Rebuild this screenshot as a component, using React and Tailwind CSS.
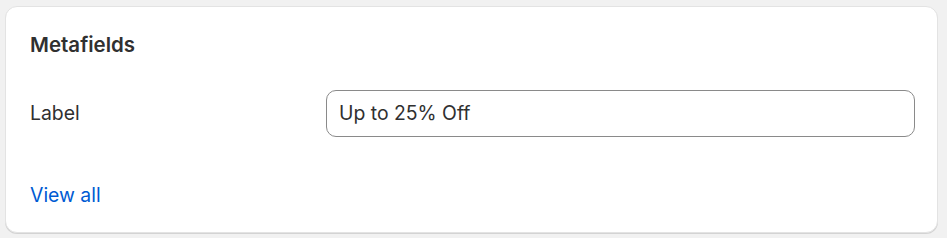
export default function App() {
  return (
    <div className="min-h-screen bg-[#f1f1f1] pt-[6px] pl-[5px] pr-[9px]" style={{ fontFamily: "Inter, 'Liberation Sans', sans-serif" }}>
      <div className="rounded-[12px] bg-white border border-[#e3e3e3] shadow-[0_1px_0_rgba(0,0,0,0.12)] pl-6 pr-[22px] pt-[23px] pb-[23px]">
        <h2 className="text-[20.5px] font-semibold text-[#303030] leading-[30px]">Metafields</h2>
        <div className="flex items-center mt-[30px]">
          <div className="w-[296px] text-[19.4px] text-[#303030]">Label</div>
          <div className="flex-1 h-[47px] rounded-[10px] border border-[#8a8a8a] flex items-center px-[12px] text-[19.4px] text-[#303030]">
            Up to 25% Off
          </div>
        </div>
        <a href="#" className="block mt-[44px] text-[19.4px] text-[#005bd3] leading-[28px]">View all</a>
      </div>
    </div>
  );
}
